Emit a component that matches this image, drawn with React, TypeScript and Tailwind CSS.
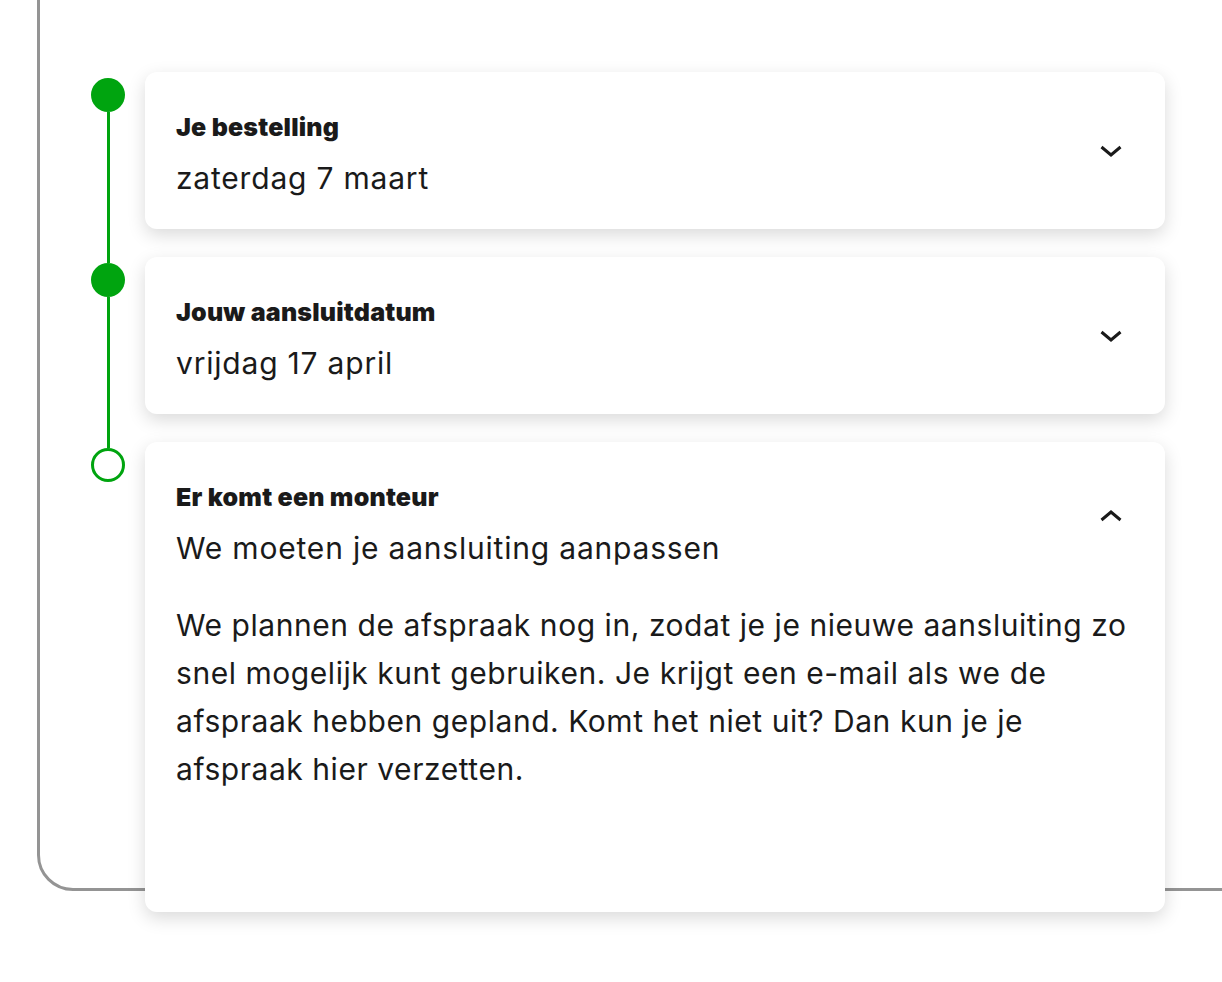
import { ReactNode } from 'react';

type Step = {
  title: string;
  subtitle: string;
  done: boolean;
  open?: boolean;
  body?: string;
};

const steps: Step[] = [
  { title: 'Je bestelling', subtitle: 'zaterdag 7 maart', done: true },
  { title: 'Jouw aansluitdatum', subtitle: 'vrijdag 17 april', done: true },
  {
    title: 'Er komt een monteur',
    subtitle: 'We moeten je aansluiting aanpassen',
    done: false,
    open: true,
    body:
      'We plannen de afspraak nog in, zodat je je nieuwe aansluiting zo snel mogelijk kunt gebruiken. Je krijgt een e-mail als we de afspraak hebben gepland. Komt het niet uit? Dan kun je je afspraak hier verzetten.',
  },
];

function Chevron({ up }: { up?: boolean }) {
  return (
    <svg width="24" height="24" viewBox="0 0 24 24" fill="none" className="block shrink-0">
      <path
        d={up ? 'M2.5 16 L12 8 L21.5 16' : 'M2.5 8 L12 16 L21.5 8'}
        stroke="#1a1a1a"
        strokeWidth="3"
        strokeLinejoin="miter"
      />
    </svg>
  );
}

function StepCard({ step }: { step: Step }) {
  return (
    <div className="w-[1020px] rounded-[12px] bg-white shadow-[0_6px_18px_rgba(0,0,0,0.15)]">
      <div className="flex items-center justify-between pl-[31px] pr-[42px] pt-[39px] pb-[27px]">
        <div>
          <div className="text-[25px] leading-[32px] font-black tracking-[0.2px] text-[#1a1a1a]">{step.title}</div>
          <div className="mt-[11px] text-[30px] leading-[48px] tracking-[0.8px] text-[#1a1a1a]">{step.subtitle}</div>
        </div>
        <div className={`flex ${step.open ? 'mb-[22px]' : 'mb-[12px]'}`}>
          <Chevron up={step.open} />
        </div>
      </div>
      {step.body && (
        <p className="pl-[31px] pr-[20px] pt-[2px] pb-[119px] text-[30px] leading-[48px] tracking-[0.55px] text-[#1a1a1a]">
          {step.body}
        </p>
      )}
    </div>
  );
}

function Marker({ done }: { done: boolean }) {
  return done ? (
    <div className="h-[34px] w-[34px] rounded-full bg-[#00a40f]" />
  ) : (
    <div className="h-[34px] w-[34px] rounded-full border-[3px] border-[#00a40f] bg-white" />
  );
}

function Row({ step, first, last }: { step: Step; first: boolean; last: boolean }): ReactNode {
  return (
    <div className="flex">
      <div className="flex w-[34px] flex-col items-center">
        <div className={`h-[6px] w-[3px] ${first ? '' : 'bg-[#00a40f]'}`} />
        <Marker done={step.done} />
        {!last && <div className="w-[3px] flex-1 bg-[#00a40f]" />}
      </div>
      <div className={`ml-[20px] ${last ? '' : 'pb-[28px]'}`}>
        <StepCard step={step} />
      </div>
    </div>
  );
}

export default function App() {
  return (
    <div className="h-[982px] overflow-hidden bg-white" style={{ fontFamily: 'Inter, "Noto Sans", sans-serif' }}>
      <div className="ml-[37px] mr-[-80px] mt-[-40px] h-[931px] rounded-[36px] border-[3px] border-[#949494] pl-[51px] pt-[109px]">
        {steps.map((s, i) => (
          <Row key={s.title} step={s} first={i === 0} last={i === steps.length - 1} />
        ))}
      </div>
    </div>
  );
}
